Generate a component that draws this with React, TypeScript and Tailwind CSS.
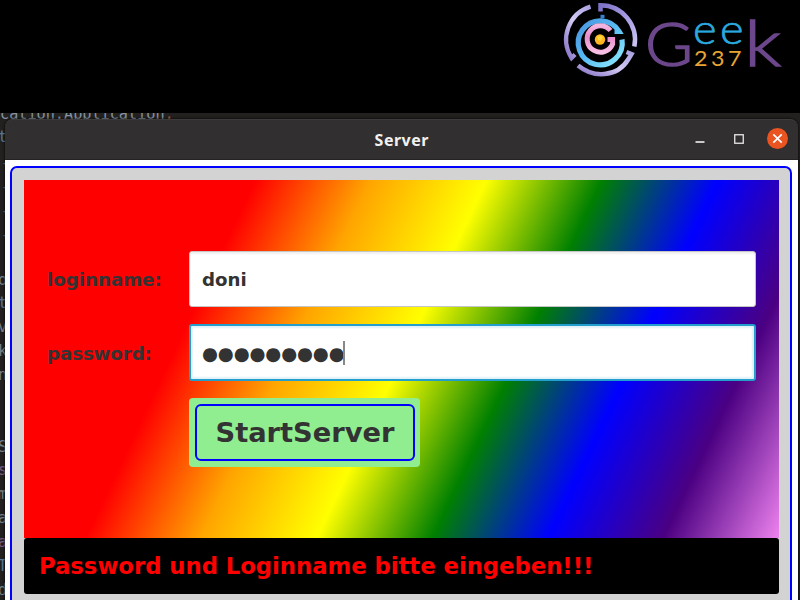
import React from "react";

function Logo() {
  return (
    <svg width="244" height="84" viewBox="556 0 244 84" fill="none">
      <defs>
        <linearGradient id="ring" x1="0" y1="1" x2="1" y2="0">
          <stop offset="0" stopColor="#8371c4" />
          <stop offset="0.5" stopColor="#d3caf4" />
          <stop offset="1" stopColor="#a9a2e2" />
        </linearGradient>
        <linearGradient id="ringRight" x1="0" y1="0" x2="1" y2="1">
          <stop offset="0" stopColor="#7d71c8" />
          <stop offset="0.5" stopColor="#a49be2" />
          <stop offset="1" stopColor="#cbc4f2" />
        </linearGradient>
        <linearGradient id="blue" x1="0" y1="0" x2="1" y2="1">
          <stop offset="0" stopColor="#4b93de" />
          <stop offset="0.45" stopColor="#55b8f2" />
          <stop offset="1" stopColor="#8eeaff" />
        </linearGradient>
        <linearGradient id="pink" x1="0" y1="0" x2="0" y2="1">
          <stop offset="0" stopColor="#f3b4e0" />
          <stop offset="0.4" stopColor="#e88ccb" />
          <stop offset="1" stopColor="#f8bfe5" />
        </linearGradient>
      </defs>
      <path d="M590.500 6.600A34.500 34.500 0 0 0 571.500 58L575 54.500" stroke="url(#ring)" strokeWidth="4.300" />
      <path d="M600.500 11.500V5.300A34.500 34.500 0 0 1 634.300 46.500" stroke="url(#ringRight)" strokeWidth="4.500" />
      <path d="M578 65.500C593 78 617 78 628.500 59L631.500 54L626.500 52" stroke="url(#ring)" strokeWidth="4.500" />
      <path d="M614.500 31.300H619A22 22 0 1 0 622 39.500" stroke="url(#blue)" strokeWidth="5.200" />
      <path d="M602.500 14.800v3.500" stroke="#3b7fcf" strokeWidth="4" />
      <path d="M610.500 30.500A13.200 13.200 0 1 0 612.600 44V39.500H607.500" stroke="url(#pink)" strokeWidth="5" />
      <circle cx="600" cy="39.500" r="5.200" fill="#ffb51f" />
      <path d="M597 37l3-2 3 2-2 4-3-1z" fill="#ffd53c" />
      <g fontFamily="Lato, sans-serif">
        <g fill="#6c478b" stroke="#6c478b" strokeWidth="1.500" fontWeight="300">
          <text x="645" y="65.500" fontSize="61" textLength="48" lengthAdjust="spacingAndGlyphs">G</text>
          <text x="744.500" y="65.500" fontSize="63.500" textLength="36.500" lengthAdjust="spacingAndGlyphs">k</text>
        </g>
        <g fill="#2ba8df" stroke="#2ba8df" strokeWidth="0.700" fontSize="40.500" fontWeight="300">
          <text x="693" y="44" textLength="23.500" lengthAdjust="spacingAndGlyphs">e</text>
          <text x="720" y="44" textLength="23.500" lengthAdjust="spacingAndGlyphs">e</text>
        </g>
        <g fill="#e7a536" fontSize="21.500">
          <text x="694" y="66" textLength="13.500" lengthAdjust="spacingAndGlyphs">2</text>
          <text x="711" y="66" textLength="13.500" lengthAdjust="spacingAndGlyphs">3</text>
          <text x="728" y="66" textLength="13.500" lengthAdjust="spacingAndGlyphs">7</text>
        </g>
      </g>
    </svg>
  );
}

const margin: [string, number, string][] = [
  ["t", 127, "#58789a"], ["-", 153, "#58789a"], ["-", 177, "#58789a"], ["-", 201, "#58789a"], ["-", 225, "#58789a"],
  ["o", 270, "#75808a"], ["t", 293, "#58789a"], ["v", 317, "#75808a"], ["k", 341, "#75808a"], ["n", 365, "#75808a"],
  ["S", 437, "#75808a"], ["s", 460, "#775a83"], ["m", 484, "#75808a"], ["a", 508, "#75808a"], ["a", 532, "#775a83"],
  ["T", 556, "#58789a"], ["d", 580, "#75808a"],
];

// Code editor left visible behind the floating window.
function Editor() {
  return (
    <div className="absolute inset-x-0 top-[113px] bottom-0 overflow-hidden bg-[#222120] font-['DejaVu_Sans_Mono',monospace] text-[15.200px] leading-[20px]">
      <div className="absolute -top-[9px] left-0 whitespace-pre text-[#8494a3]">cation.Application<span className="text-[#a85e35]">;</span></div>
      {margin.map(([c, y, color], i) => (
        <span key={i} className={c === "-" ? "absolute left-[1px]" : "absolute -left-[2px]"} style={{ top: y - 113, color }}>{c}</span>
      ))}
    </div>
  );
}

function TitleBar() {
  return (
    <div className="flex h-[41px] shrink-0 items-center rounded-t-[8px] border-t border-[#3d3b3b] border-b border-b-[#242222] bg-[#312f30] pr-[10px]">
      <div className="w-[103px]" />
      <div className="flex-1 pl-px text-center font-['Noto_Sans',sans-serif] text-[16px] font-bold tracking-[0.500px] text-[#f2f1f0]">Server</div>
      <div className="flex w-[93px] items-center">
        <svg width="10" height="12"><path d="M0.500 8h9" stroke="#fff" strokeWidth="1.500" /></svg>
        <svg className="-mt-[2px] ml-[29px]" width="10" height="10"><rect x=".75" y=".75" width="8.500" height="8.500" fill="none" stroke="#e8e8e8" strokeWidth="1.300" /></svg>
        <svg className="-mt-[2px] ml-auto" width="21" height="21"><circle cx="10.500" cy="10.500" r="10.500" fill="#e95420" /><path d="M6.300 6.300l8.400 8.400m0-8.400l-8.400 8.400" stroke="#fff" strokeWidth="1.700" /></svg>
      </div>
    </div>
  );
}

export default function App() {
  return (
    <div className="relative h-[600px] w-[800px] overflow-hidden bg-black">
      <Editor />
      <div className="relative flex h-full flex-col">
        <header className="flex h-[119px] shrink-0 justify-end"><Logo /></header>
        <main className="mr-[2.500px] ml-[5px] flex h-[500px] shrink-0 flex-col rounded-t-[8px] shadow-[0_0_3px_#000]">
          <TitleBar />
          <div className="flex-1 bg-white pt-[6px] pr-[5.500px] pl-[5px]">
            <div className="h-full rounded-[7px] border-2 border-[#0000ff] bg-[#d3d3d3] pt-[11.500px] pr-[11px] pl-[12px] font-['DejaVu_Sans',sans-serif] font-bold text-[#333]">
              <div className="h-[358px] bg-[linear-gradient(115.400deg,red_25%,orange_37.500%,yellow_50%,green_62.500%,blue_75%,indigo_87.500%,violet_100%)] pt-[71.500px] pr-[23px] pl-[23px] text-[18.200px]">
                <div className="flex h-[56px] items-center">
                  <label className="w-[142px] pt-[2px]">loginname:</label>
                  <div className="flex h-full flex-1 items-center rounded-[3px] border border-[#c5c5c5] bg-white pt-[2px] pl-[12px] shadow-[inset_0_2px_2px_#f0f0f0]">doni</div>
                </div>
                <div className="mt-[17px] flex h-[57px] items-center">
                  <label className="w-[142px] pt-[2px] tracking-[-0.080px]">password:</label>
                  <div className="flex h-full flex-1 items-center rounded-[3px] border-2 border-[#229fcd] bg-white pl-[11px] shadow-[inset_0_0_2px_2px_#e0f1f7]">
                    <span className="pt-[3px] text-[18.300px] leading-none tracking-[-0.120px]">●●●●●●●●●</span>
                    <span className="-ml-px h-[24px] w-[2px] bg-[#888]" />
                  </div>
                </div>
                <div className="mt-[17px] ml-[142px] h-[69px] w-[231px] rounded-[4px] bg-[#90ee90] p-[6px] pr-[5px]">
                  <div className="flex h-full items-center justify-center rounded-[6px] border-2 border-[#0000ff] pt-[2px] text-[27.300px]">StartServer</div>
                </div>
              </div>
              <div className="flex h-[56px] items-center rounded-[3px] bg-black pt-[2px] pl-[15px] text-[22.750px] tracking-[-0.030px] text-[#ff0000]">
                Password und Loginname bitte eingeben!!!
              </div>
            </div>
          </div>
        </main>
      </div>
    </div>
  );
}
